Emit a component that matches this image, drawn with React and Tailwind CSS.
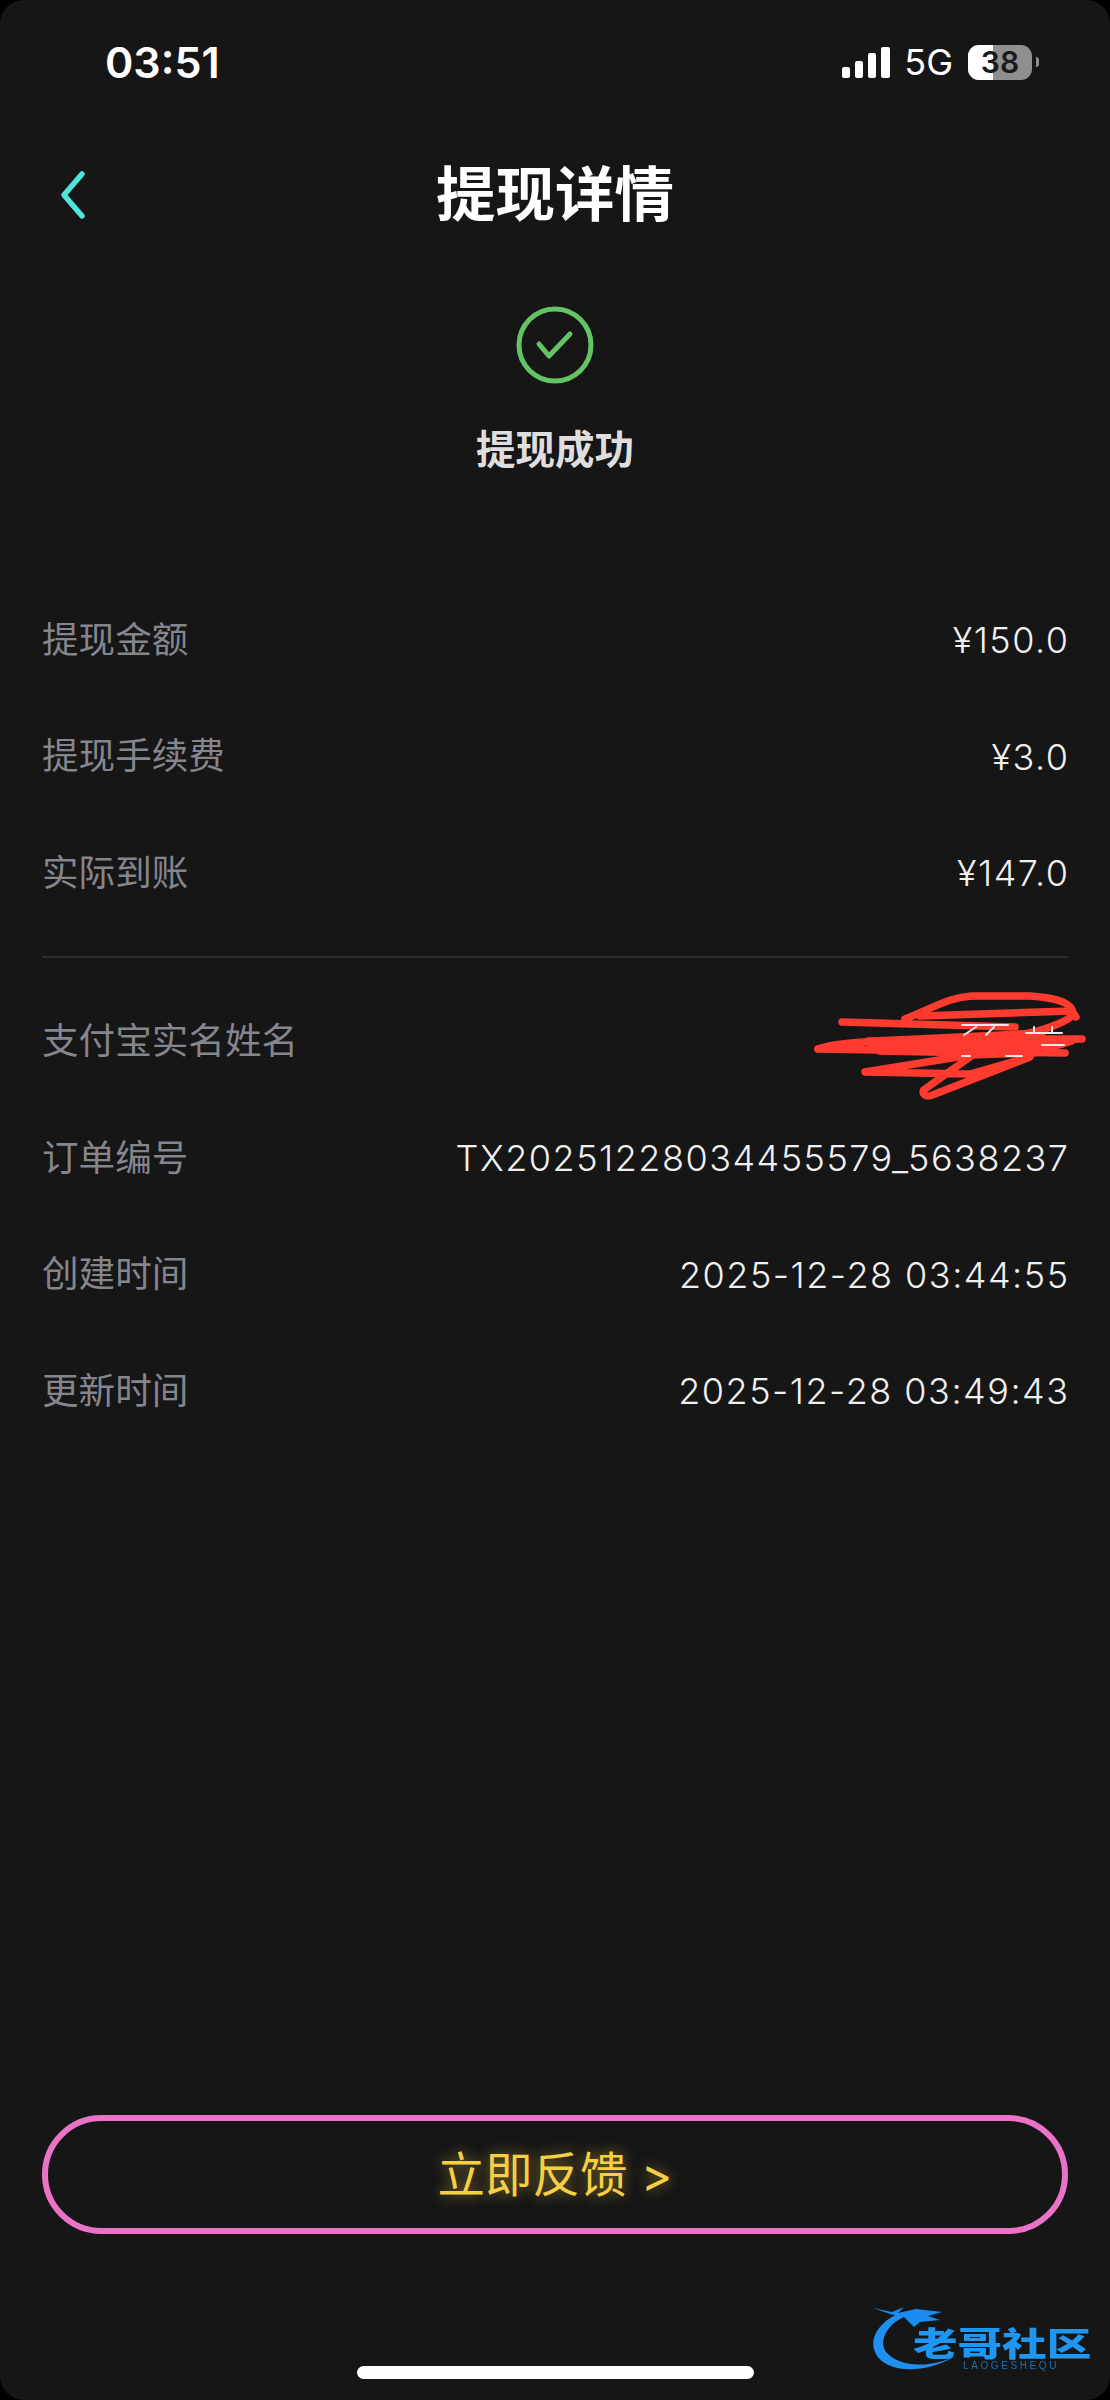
import React from 'react';

const topRows = [
  { label: '提现金额', value: '¥150.0' },
  { label: '提现手续费', value: '¥3.0' },
  { label: '实际到账', value: '¥147.0' },
];

const bottomRows = [
  { label: '支付宝实名姓名', value: '', redacted: true },
  { label: '订单编号', value: 'TX20251228034455579_5638237' },
  { label: '创建时间', value: '2025-12-28 03:44:55' },
  { label: '更新时间', value: '2025-12-28 03:49:43' },
];

const font = "font-['Inter','Noto_Sans_CJK_SC',sans-serif]";

function Scribble() {
  return (
    <svg
      className="absolute right-[-42px] top-[-35px]"
      width="330"
      height="170"
      viewBox="0 0 330 170"
      fill="none"
      stroke="#ff3b30"
      strokeWidth="7.5"
      strokeLinecap="round"
      strokeLinejoin="round"
    >
      <path d="M62 73L235 78" />
      <path d="M125 70C155 58 170 48 192 47L250 47C280 49 293 55 293 65C292 70 270 80 245 85L100 95" />
      <path d="M140 67L292 62L296 68" />
      <path d="M38 100C60 92 100 90 302 90" />
      <path d="M38 100L285 104" />
      <path d="M95 92L262 84" />
      <path d="M88 92L292 92L250 105L100 102Z" fill="#ff3b30" />
      <path d="M270 103L190 106L85 123L190 125L250 108L155 145C145 150 140 143 145 140L190 108" />
      {/* leftovers of the name sticking out under the pen */}
      <path d="M182 76h46M184 86l12-8M206 86l8-8M246 84h36M254 78v6M272 78v6M262 96h22M182 107h8M226 107h16" stroke="#e8e8e8" strokeWidth="2" />
    </svg>
  );
}

function Logo() {
  return (
    <div className="absolute left-[868px] top-[2304px] h-[72px] w-[230px] blur-[0.5px]">
      <svg className="absolute left-0 top-0" width="110" height="72" viewBox="0 0 110 72" fill="none">
        <path d="M32 9C10 18 0 36 8 50C16 66 50 74 90 51C60 66 30 62 18 48C10 36 20 20 36 13Z" fill="#1e90f0" />
        <path d="M5 4L24 8L36 3L30 9L48 5L74 8L60 12L72 16L52 18L46 23L36 13L22 10Z" fill="#1a8cf0" />
      </svg>
      <span className="absolute left-[45px] top-[20px] origin-left scale-x-[1.35] whitespace-nowrap font-['Noto_Sans_CJK_SC',sans-serif] text-[33px] font-black leading-[36px] text-[#1f97f2]">
        老哥社区
      </span>
      <span className="absolute left-[95px] top-[56px] whitespace-nowrap font-['Liberation_Sans',sans-serif] text-[10px] leading-[12px] tracking-[2.6px] text-[#1b6fb5]">
        LAOGESHEQU
      </span>
    </div>
  );
}

function Row({ label, value, redacted }) {
  return (
    <div className="relative flex h-[116.5px] items-center justify-between">
      <span className="text-[36.6px] text-[#85858e]">{label}</span>
      <span className="mr-[-1.5px] text-[36px] font-light tracking-[1.5px] text-[#f0f0f0]">{value}</span>
      {redacted && <Scribble />}
    </div>
  );
}

export default function App() {
  return (
    <div className={`${font} relative h-[2400px] w-[1110px] bg-black`}>
      <div className="flex h-full flex-col rounded-[24px] bg-[#161616]">
        {/* status bar */}
        <div className="flex h-[124px] items-center justify-between pl-[105px] pr-[71px] text-white">
          <span className="text-[43px] font-semibold leading-none">03:51</span>
          <div className="flex items-center">
            <div className="flex items-end gap-[5px] pt-[1px]">
              <div className="h-[11px] w-[8px] rounded-[2px] bg-white" />
              <div className="h-[17px] w-[8px] rounded-[2px] bg-white" />
              <div className="h-[25px] w-[8px] rounded-[2px] bg-white" />
              <div className="h-[31px] w-[9px] rounded-[2px] bg-white" />
            </div>
            <span className="ml-[14px] text-[36px] font-normal leading-none">5G</span>
            <div className="relative ml-[15px] flex h-[35px] w-[64px] items-center justify-center overflow-hidden rounded-[11px] bg-[#8f8f8f]">
              <div className="absolute inset-y-0 left-0 w-[25px] bg-white" />
              <span className="relative text-[30px] font-semibold leading-none text-[#1b1b1d]">38</span>
            </div>
            <div className="ml-[4px] h-[10px] w-[3px] rounded-r-full bg-[#8f8f8f]" />
          </div>
        </div>

        {/* header */}
        <div className="relative flex h-[142px] items-center justify-center">
          <svg className="absolute left-[58px] top-[46px]" width="30" height="50" viewBox="0 0 30 50" fill="none">
            <path d="M24 4L6 25L24 46" stroke="#4ce6da" strokeWidth="5.5" strokeLinecap="round" strokeLinejoin="round" />
          </svg>
          <h1 className="text-[59.5px] font-bold leading-none text-white">提现详情</h1>
        </div>

        {/* result */}
        <div className="mt-[40px] flex flex-col items-center">
          <svg width="78" height="78" viewBox="0 0 78 78" fill="none">
            <circle cx="39" cy="39" r="36" stroke="#62c462" strokeWidth="5" />
            <path d="M23 38L33 50L54 28" stroke="#62c462" strokeWidth="5" strokeLinecap="round" strokeLinejoin="round" />
          </svg>
          <p className="mt-[42px] text-[39.5px] font-bold leading-[48px] text-[#dedede]">提现成功</p>
        </div>

        {/* details */}
        <div className="mx-[42px] mt-[108px]">
          {topRows.map((row) => (
            <Row key={row.label} {...row} />
          ))}
          <div className="mb-[26px] mt-[24px] h-[2px] bg-[#2e2e30]" />
          {bottomRows.map((row) => (
            <Row key={row.label} {...row} />
          ))}
        </div>

        {/* feedback */}
        <button className="mx-[42px] mt-auto flex h-[119px] items-center justify-center rounded-[60px] border-[6px] border-[#ea73c8] bg-transparent text-[47.5px] leading-none text-[#f6cf45] [text-shadow:0_0_14px_rgba(246,207,69,0.55)]">
          立即反馈 &gt;
        </button>

        <div className="mb-[21px] mt-[132px] h-[13px] w-[397px] self-center rounded-full bg-white" />
      </div>
      <Logo />
    </div>
  );
}
